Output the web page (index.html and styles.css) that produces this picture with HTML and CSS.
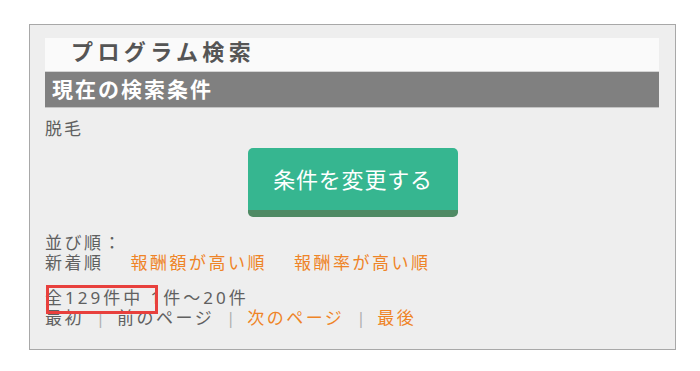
FILE: index.html
```html
<!DOCTYPE html>
<html lang="ja">
<head>
<meta charset="utf-8">
<title>プログラム検索</title>
<link rel="stylesheet" href="styles.css">
</head>
<body>
<div class="panel">
  <h1 class="title">プログラム検索</h1>
  <h2 class="cond-head">現在の検索条件</h2>
  <p class="cond">脱毛</p>
  <div class="btn-wrap"><a class="btn" href="#">条件を変更する</a></div>
  <div class="sort">
    <div class="sort-label">並び順：</div>
    <div class="sort-opts"><span class="current">新着順</span><a class="link" href="#">報酬額が高い順</a><a class="link" href="#">報酬率が高い順</a></div>
  </div>
  <div class="count">全129件中 1件〜20件</div>
  <div class="pager"><span class="off">最初</span><span class="sep">|</span><span class="off">前のページ</span><span class="sep">|</span><a class="link" href="#">次のページ</a><span class="sep">|</span><a class="link" href="#">最後</a></div>
  <div class="mark"></div>
</div>
</body>
</html>
```
FILE: styles.css
```css
html, body {
  margin: 0;
  padding: 0;
  background: #ffffff;
}
body {
  font-family: "Noto Sans", "Noto Sans CJK JP", sans-serif;
  color: #606060;
}
.panel {
  position: relative;
  width: 614px;
  margin: 24px 0 0 29px;
  padding: 13px 16px 21px 15px;
  background: #eeeeee;
  border: 1px solid #a8a8a8;
}
.title {
  margin: 0;
  height: 33px;
  box-sizing: border-box;
  padding: 0 0 6px 26px;
  line-height: 27px;
  background: #fafafa;
  color: #555555;
  font-size: 22px;
  font-weight: bold;
  letter-spacing: 4.4px;
}
.cond-head {
  margin: 0;
  height: 37px;
  box-sizing: border-box;
  padding-left: 7px;
  background: #808080;
  border-top: 1px solid #d4d4d4;
  border-bottom: 1px solid #c4c4c4;
  color: #ffffff;
  font-size: 21px;
  font-weight: bold;
  line-height: 35px;
  letter-spacing: 2px;
}
.cond {
  margin: 11px 0 0;
  font-size: 17px;
  line-height: 20px;
  letter-spacing: 2px;
}
.btn-wrap {
  display: flex;
  justify-content: center;
  margin-top: 9px;
  padding-left: 2px;
}
.btn {
  display: block;
  width: 210px;
  height: 69px;
  box-sizing: border-box;
  background: #36b690;
  border-bottom: 7px solid #4f8a64;
  border-radius: 5px;
  color: #ffffff;
  text-decoration: none;
  text-align: center;
  font-size: 22px;
  line-height: 62px;
  letter-spacing: 0.8px;
}
.sort {
  margin-top: 16px;
  font-size: 17px;
  line-height: 20px;
  letter-spacing: 2.5px;
}
.sort-opts .link {
  margin-left: 27px;
}
.link {
  color: #ee8427;
  text-decoration: none;
}
.count {
  margin-top: 15px;
  font-size: 17px;
  line-height: 20px;
  letter-spacing: 3px;
}
.pager {
  font-size: 17px;
  line-height: 20px;
  letter-spacing: 2.5px;
}
.sep {
  display: inline-block;
  width: 33px;
  text-align: center;
  letter-spacing: 0;
  color: #b0b0b0;
}
.mark {
  position: absolute;
  left: 16px;
  top: 260px;
  width: 112px;
  height: 29px;
  box-sizing: border-box;
  border: 3px solid #e8403d;
}
```
